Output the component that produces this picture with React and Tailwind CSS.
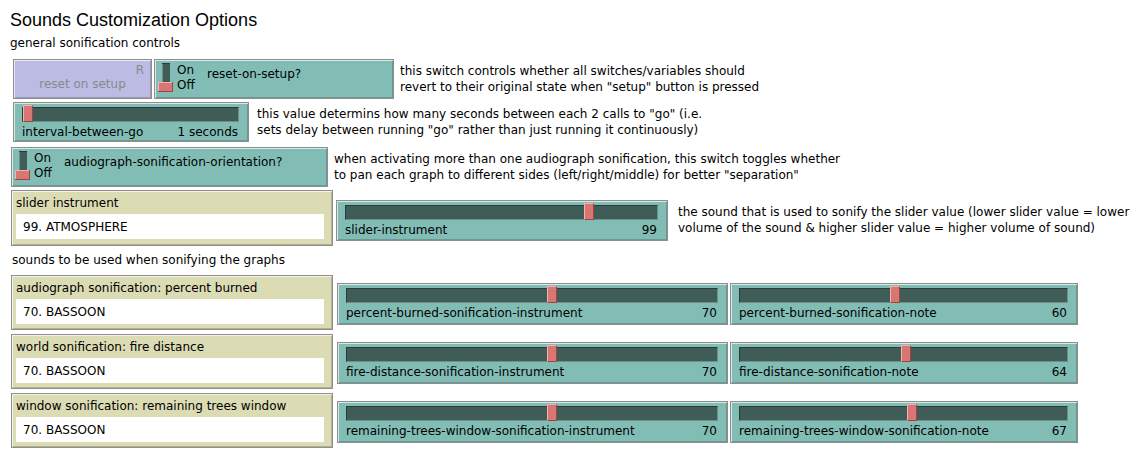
import React from "react";

const FONT = { fontFamily: '"DejaVu Sans", Verdana, sans-serif' };
const TITLE_FONT = { fontFamily: '"Liberation Sans", Arial, sans-serif' };
const FRAME =
  "border border-[#8e8e8e] shadow-[inset_1px_1px_0_#ffffffaa,inset_-1px_-1px_0_#00000030]";
const TEAL = "bg-[#82bdb5]";

function Slider({ className, label, value, frac }) {
  return (
    <div className={`flex flex-col ${TEAL} ${FRAME} ${className}`}>
      <div className="relative ml-[8px] mr-[9px] mt-[4px] h-[15px] bg-[#3f5c57] border-t border-l border-t-[#2a3c39] border-l-[#2a3c39] border-b border-r border-b-[#6f8f89] border-r-[#6f8f89]">
        <div
          className="absolute top-[-3px] w-[10px] h-[17px] bg-[#d97573] border-l border-t border-l-[#f3b3b0] border-t-[#f3b3b0] border-r border-b border-r-[#9c4543] border-b-[#9c4543]"
          style={{ left: `calc(${frac} * (100% - 10px))` }}
        />
      </div>
      <div className="flex justify-between pl-[8px] pr-[10px] mt-[3px] text-[12px] leading-[14px] text-black">
        <span>{label}</span>
        <span>{value}</span>
      </div>
    </div>
  );
}

function Toggle() {
  return (
    <svg width="16" height="30" viewBox="0 0 16 30" className="shrink-0">
      <rect x="4" y="0" width="8" height="20" fill="#3f5c57" />
      <rect x="4" y="0" width="1" height="20" fill="#6f8f89" />
      <rect x="4" y="0" width="8" height="1" fill="#2a3c39" />
      <rect x="0" y="19" width="15" height="10" fill="#d97573" />
      <rect x="0" y="19" width="15" height="1" fill="#f3b3b0" />
      <rect x="0" y="19" width="1" height="10" fill="#f3b3b0" />
      <rect x="0" y="28" width="15" height="1" fill="#9c4543" />
      <rect x="14" y="19" width="1" height="10" fill="#9c4543" />
    </svg>
  );
}

function Switch({ className, label }) {
  return (
    <div className={`flex items-start pl-[3px] pt-[3px] ${TEAL} ${FRAME} ${className}`}>
      <Toggle />
      <div className="ml-[3px] w-[30px] text-[12px] leading-[15px] text-black">
        <div>On</div>
        <div>Off</div>
      </div>
      <div className="mt-[4px] text-[12px] leading-[14px] text-black">{label}</div>
    </div>
  );
}

function Chooser({ className, label, value }) {
  return (
    <div className={`flex flex-col pl-[4px] pr-[8px] pt-[5px] bg-[#dcdcb4] ${FRAME} ${className}`}>
      <div className="text-[12px] leading-[14px] text-black">{label}</div>
      <div className="mt-[4px] h-[25px] bg-white flex items-center pl-[7px] text-[12px] text-black">
        {value}
      </div>
    </div>
  );
}

function Note({ className, children }) {
  return (
    <div className={`text-[12px] leading-[16px] text-black whitespace-nowrap ${className}`}>{children}</div>
  );
}

export default function App() {
  const rows = [
    {
      label: "audiograph sonification: percent burned",
      inst: "percent-burned-sonification-instrument",
      note: "percent-burned-sonification-note",
      nv: 60,
      nf: 0.473,
    },
    {
      label: "world sonification: fire distance",
      inst: "fire-distance-sonification-instrument",
      note: "fire-distance-sonification-note",
      nv: 64,
      nf: 0.508,
    },
    {
      label: "window sonification: remaining trees window",
      inst: "remaining-trees-window-sonification-instrument",
      note: "remaining-trees-window-sonification-note",
      nv: 67,
      nf: 0.527,
    },
  ];

  return (
    <div style={FONT} className="w-[1143px] h-[463px] bg-white pl-[10px] text-black overflow-hidden">
      <div style={TITLE_FONT} className="pt-[10px] text-[18px] leading-[21px]">Sounds Customization Options</div>
      <div className="mt-[5px] text-[12px] leading-[14px]">general sonification controls</div>

      <div className="mt-[9px] ml-[3px] flex items-center">
        <div className={`w-[139px] h-[40px] flex flex-col bg-[#bbbbe3] ${FRAME}`}>
          <div className="pt-[3px] pr-[7px] text-right text-[12px] leading-[14px] text-[#8a8a8a]">R</div>
          <div className="mt-[0px] text-center text-[12px] leading-[14px] text-[#8a8a8a]">reset on setup</div>
        </div>
        <Switch className="ml-[2px] w-[240px] h-[40px]" label="reset-on-setup?" />
        <Note className="ml-[6px]">
          this switch controls whether all switches/variables should
          <br />
          revert to their original state when "setup" button is pressed
        </Note>
      </div>

      <div className="mt-[3px] ml-[3px] flex items-center">
        <Slider className="w-[236px] h-[40px]" label="interval-between-go" value="1 seconds" frac={0} />
        <Note className="ml-[8px]">
          this value determins how many seconds between each 2 calls to "go" (i.e.
          <br />
          sets delay between running "go" rather than just running it continuously)
        </Note>
      </div>

      <div className="mt-[5px] ml-[1px] flex items-center">
        <Switch className="w-[317px] h-[40px]" label="audiograph-sonification-orientation?" />
        <Note className="ml-[6px]">
          when activating more than one audiograph sonification, this switch toggles whether
          <br />
          to pan each graph to different sides (left/right/middle) for better "separation"
        </Note>
      </div>

      <div className="mt-[3px] ml-[1px] flex items-start">
        <Chooser className="w-[322px] h-[56px]" label="slider instrument" value="99. ATMOSPHERE" />
        <Slider className="ml-[3px] mt-[10px] w-[332px] h-[41px]" label="slider-instrument" value="99" frac={0.792} />
        <Note className="ml-[10px] mt-[14px]">
          the sound that is used to sonify the slider value (lower slider value = lower
          <br />
          volume of the sound &amp; higher slider value = higher volume of sound)
        </Note>
      </div>

      <div className="mt-[7px] ml-[2px] text-[12px] leading-[14px]">sounds to be used when sonifying the graphs</div>

      <div className="mt-[8px] ml-[1px] flex flex-col gap-[4px]">
        {rows.map((r) => (
          <div key={r.inst} className="flex items-start">
            <Chooser className="w-[322px] h-[55px]" label={r.label} value="70. BASSOON" />
            <Slider className="ml-[4px] mt-[8px] w-[391px] h-[42px]" label={r.inst} value="70" frac={0.555} />
            <Slider className="ml-[2px] mt-[8px] w-[348px] h-[42px]" label={r.note} value={String(r.nv)} frac={r.nf} />
          </div>
        ))}
      </div>
    </div>
  );
}
